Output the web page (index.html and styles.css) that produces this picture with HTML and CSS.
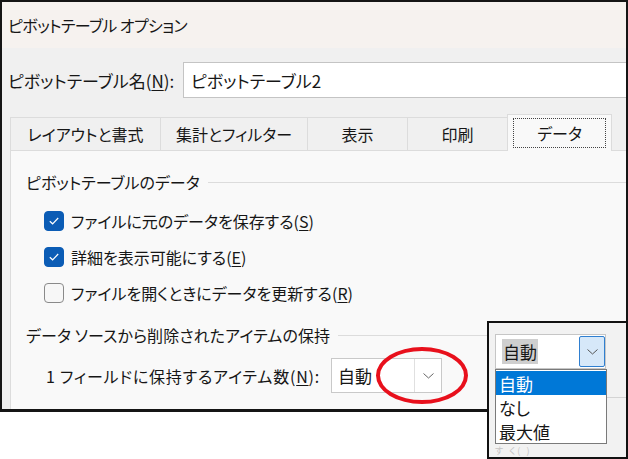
FILE: index.html
```html
<!DOCTYPE html>
<html lang="ja">
<head>
    <meta charset="UTF-8">
    <title>ピボットテーブル オプション</title>
    <link rel="stylesheet" href="styles.css">
</head>
<body>

    <!-- Main dialog -->
    <div class="dialog">
        <div class="titlebar">ピボットテーブル オプション</div>

        <div class="name-row">
            <span class="name-label">ピボットテーブル名(<u>N</u>):</span>
            <div class="textbox">ピボットテーブル2</div>
        </div>

        <div class="tabs">
            <div class="tab tab-1">レイアウトと書式</div>
            <div class="tab tab-2">集計とフィルター</div>
            <div class="tab tab-3">表示</div>
            <div class="tab tab-4">印刷</div>
            <div class="tab tab-5 active"><span class="focus">データ</span></div>
        </div>

        <div class="panel">
            <div class="group-title">ピボットテーブルのデータ</div>
            <div class="check-row first">
                <span class="checkbox checked">
                    <svg width="12" height="10" viewBox="0 0 12 10"><path d="M1.8 5.2 L4.6 7.8 L10.2 2" fill="none" stroke="#fff" stroke-width="1.2"/></svg>
                </span>
                ファイルに元のデータを保存する(<u>S</u>)
            </div>
            <div class="check-row">
                <span class="checkbox checked">
                    <svg width="12" height="10" viewBox="0 0 12 10"><path d="M1.8 5.2 L4.6 7.8 L10.2 2" fill="none" stroke="#fff" stroke-width="1.2"/></svg>
                </span>
                詳細を表示可能にする(<u>E</u>)
            </div>
            <div class="check-row">
                <span class="checkbox"></span>
                ファイルを開くときにデータを更新する(<u>R</u>)
            </div>

            <div class="group-title second">データ ソースから削除されたアイテムの保持</div>
            <div class="field-row">
                <span class="field-label">1 フィールドに保持するアイテム数(<u>N</u>):</span>
                <div class="combo">
                    <span class="combo-text">自動</span>
                    <span class="combo-btn">
                        <svg width="11" height="6" viewBox="0 0 11 6"><path d="M0.5 0.5 L5.5 5 L10.5 0.5" fill="none" stroke="#666" stroke-width="1"/></svg>
                    </span>
                </div>
            </div>
        </div>
    </div>

    <!-- Red callout -->
    <div class="callout"></div>

    <!-- Opened dropdown capture -->
    <div class="popup">
        <div class="bg-line"></div>
        <div class="ghost">す く( )</div>
        <div class="popup-combo">
            <span class="combo-text"><span class="sel-text">自動</span></span>
            <span class="popup-btn">
                <svg width="11" height="6" viewBox="0 0 11 6"><path d="M0.5 0.5 L5.5 5 L10.5 0.5" fill="none" stroke="#555" stroke-width="1"/></svg>
            </span>
        </div>
        <div class="popup-list">
            <div class="item selected">自動</div>
            <div class="item">なし</div>
            <div class="item">最大値</div>
        </div>
    </div>

</body>
</html>
```

FILE: styles.css
```css
/* General */
body {
    margin: 0;
    width: 628px;
    height: 459px;
    position: relative;
    overflow: hidden;
    background-color: #fff;
    color: #161616;
    font-family: "Noto Sans CJK JP", "Noto Sans", sans-serif;
    font-feature-settings: "palt";
}

u {
    text-underline-offset: 2px;
}

/* Dialog */
.dialog {
    width: 628px;
    height: 412px;
    box-sizing: border-box;
    border: 2px solid #151515;
    border-bottom-width: 3px;
    background-color: #f0f0f0;
    display: flex;
    flex-direction: column;
}

.titlebar {
    height: 46px;
    background-color: #f6f2ef;
    font-size: 16px;
    letter-spacing: -0.6px;
    padding-left: 6px;
    display: flex;
    align-items: center;
}

.name-row {
    display: flex;
    align-items: center;
    height: 36px;
    margin-top: 14px;
    padding-left: 6px;
    font-size: 17px;
}

.name-label {
    width: 175px;
    flex-shrink: 0;
}

.textbox {
    flex: 1;
    height: 36px;
    box-sizing: border-box;
    border: 1px solid #c4c4c4;
    border-right: none;
    background-color: #fff;
    padding-left: 7px;
    display: flex;
    align-items: center;
}

/* Tabs */
.tabs {
    display: flex;
    align-items: flex-end;
    height: 36px;
    margin-top: 16px;
    padding-left: 8px;
}

.tab {
    height: 33px;
    box-sizing: border-box;
    border: 1px solid #dcdcdc;
    border-bottom: none;
    margin-right: -1px;
    background-color: #f0f0f0;
    font-size: 16px;
    display: flex;
    align-items: center;
    justify-content: center;
}

.tab-1 { width: 151px; }
.tab-2 { width: 148px; }
.tab-3 { width: 101px; }
.tab-4 { width: 101px; }
.tab-5 { width: 105px; }

.tab.active {
    height: 37px;
    margin-bottom: -1px;
    background-color: #f9f9f9;
    position: relative;
    z-index: 1;
    align-items: flex-start;
    padding-top: 3px;
}

.focus {
    width: 93px;
    height: 30px;
    box-sizing: border-box;
    border: 1px dotted #444;
    display: flex;
    align-items: center;
    justify-content: center;
}

/* Panel */
.panel {
    flex: 1;
    margin-left: 8px;
    padding: 19px 0 0 15px;
    background-color: #f9f9f9;
    border-top: 1px solid #dcdcdc;
    border-left: 1px solid #dcdcdc;
}

.group-title {
    display: flex;
    align-items: center;
    height: 24px;
    font-size: 16px;
}

.group-title::after {
    content: "";
    flex: 1;
    border-top: 1px solid #dcdcdc;
    margin-left: 8px;
}

.group-title.second {
    margin-top: 12px;
    letter-spacing: 0.1px;
}

.check-row {
    display: flex;
    align-items: center;
    height: 36px;
    padding-left: 18px;
    font-size: 16px;
}

.check-row.first {
    margin-top: 9px;
}

.checkbox {
    width: 20px;
    height: 20px;
    box-sizing: border-box;
    border: 1px solid #8a8a8a;
    border-radius: 4px;
    background-color: #f7f7f7;
    margin-right: 7px;
    display: flex;
    align-items: center;
    justify-content: center;
}

.checkbox.checked {
    background-color: #0b5cb5;
    border-color: #0b5cb5;
}

.field-row {
    display: flex;
    align-items: center;
    height: 35px;
    margin-top: 11px;
    padding-left: 20px;
    font-size: 16px;
}

.field-label {
    width: 285px;
    flex-shrink: 0;
    letter-spacing: 0.8px;
}

.combo {
    width: 111px;
    height: 35px;
    box-sizing: border-box;
    border: 1px solid #c9c9c9;
    background-color: #fff;
    display: flex;
    font-size: 17px;
}

.combo-text {
    flex: 1;
    padding-left: 6px;
    display: flex;
    align-items: center;
}

.combo-btn {
    width: 26px;
    border-left: 1px solid #e0e0e0;
    display: flex;
    align-items: center;
    justify-content: center;
}

/* Red callout */
.callout {
    position: absolute;
    left: 376px;
    top: 347px;
    width: 92px;
    height: 57px;
    box-sizing: border-box;
    border: 4px solid #e8101c;
    border-radius: 50%;
}

/* Dropdown capture */
.popup {
    position: absolute;
    left: 487px;
    top: 321px;
    width: 141px;
    height: 138px;
    box-sizing: border-box;
    border: 2px solid #111;
    background-color: #f2f2f2;
    padding: 11px 0 0 6px;
    font-size: 17px;
    overflow: hidden;
}

.bg-line {
    position: absolute;
    left: 118px;
    right: 0;
    top: 74px;
    height: 1px;
    background-color: #d4d4d4;
}

.ghost {
    position: absolute;
    left: 6px;
    top: 123px;
    font-size: 9px;
    line-height: 10px;
    color: #c4c4c4;
    letter-spacing: 2px;
}

.popup-combo {
    width: 111px;
    height: 35px;
    box-sizing: border-box;
    border: 1px solid #c6c6c6;
    background-color: #fff;
    display: flex;
}

.sel-text {
    background-color: #cfcfcf;
    padding: 0 1px;
}

.popup-btn {
    width: 26px;
    margin: 1px 0;
    box-sizing: border-box;
    border: 1px solid #2f7fd0;
    border-radius: 2px;
    background-color: #d6e8f9;
    display: flex;
    align-items: center;
    justify-content: center;
}

.popup-list {
    width: 112px;
    height: 75px;
    box-sizing: border-box;
    border: 1px solid #7a7a7a;
    background-color: #fff;
    padding-top: 1px;
    position: relative;
}

.item {
    height: 24px;
    padding-left: 3px;
    display: flex;
    align-items: center;
}

.item.selected {
    background-color: #0078d7;
    color: #fff;
}
```
